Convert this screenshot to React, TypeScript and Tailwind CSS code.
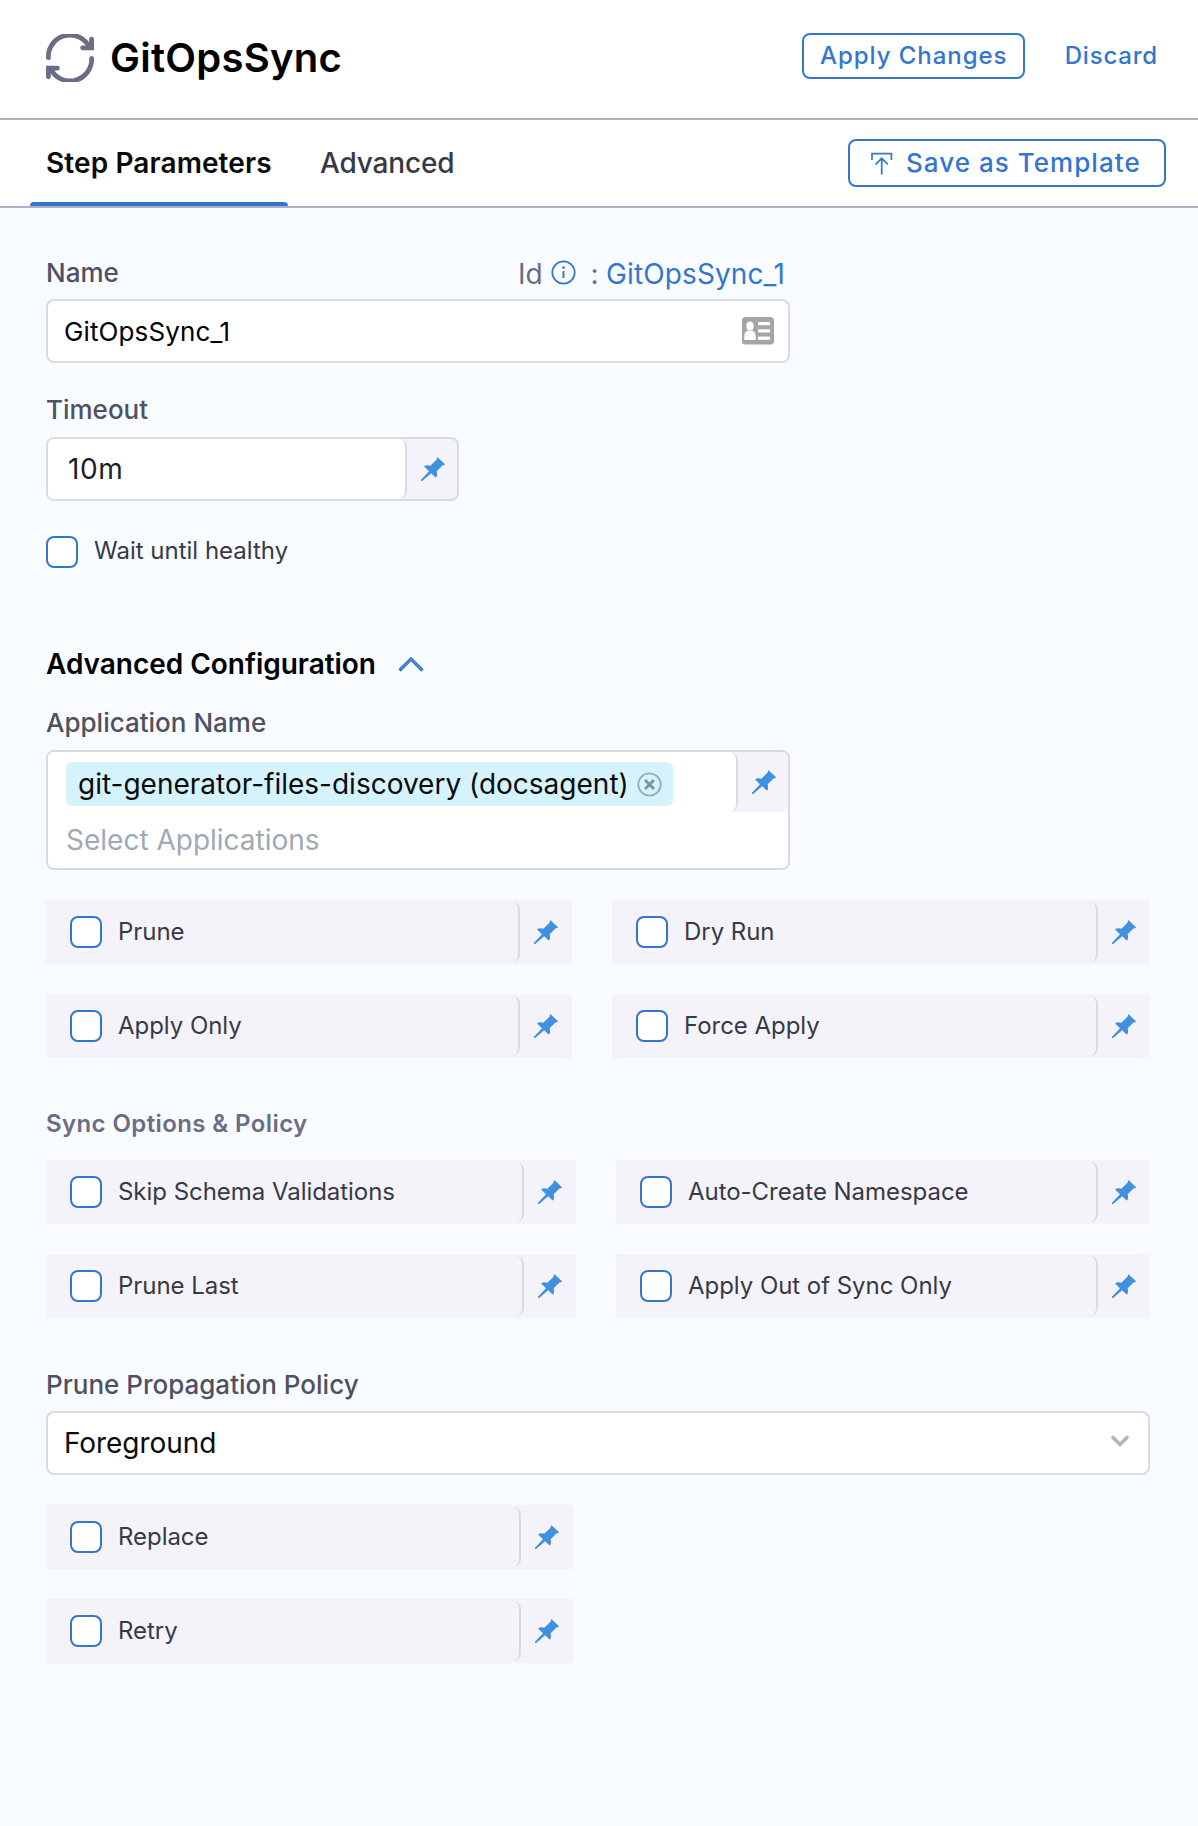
import React from 'react';

function SyncIcon() {
  return (
    <svg width="48" height="48" viewBox="0 0 48 48" fill="none" stroke="#6b6d85" strokeWidth="4.8" strokeLinecap="round">
      <path d="M2.400 23.600A21.600 21.600 0 0 1 43.500 13.400" />
      <path d="M45.600 5.200V13.800H36.600" />
      <path d="M45.600 24.400A21.600 21.600 0 0 1 4.500 34.600" />
      <path d="M2.400 42.800V34.200H11.400" />
    </svg>
  );
}

function PinIcon() {
  return (
    <svg width="24" height="24" viewBox="0 0 72 72" fill="#4090e0" className="shrink-0">
      <path d="M49 0L72 21.500L70 24.500L65 24.500L47 43Q50 52 46.500 61L43 61L30.500 49L3.500 72H0V68.500L24 42.500L10 29.500V27Q18 23.500 28 26L46.500 8Z" />
    </svg>
  );
}

function TemplateIcon() {
  return (
    <svg width="22" height="23" viewBox="0 0 22 23" fill="none" stroke="#3376cf" strokeWidth="1.7">
      <path d="M1 8V1.600H20.400V8" />
      <path d="M10.700 22.500V6.500M4.500 12.500L10.700 6.300L16.900 12.500" />
    </svg>
  );
}

function InfoIcon() {
  return (
    <svg width="25" height="25" viewBox="0 0 25 25" fill="none">
      <circle cx="12.500" cy="12.500" r="11.200" stroke="#3376cf" strokeWidth="1.700" />
      <circle cx="12.500" cy="7.600" r="1.300" fill="#3376cf" />
      <path d="M12.500 11V18" stroke="#3376cf" strokeWidth="1.900" />
    </svg>
  );
}

function ContactCardIcon() {
  return (
    <svg width="32" height="28" viewBox="0 0 32 28">
      <rect width="32" height="27.500" rx="3.500" fill="#a5a5a5" />
      <g fill="#fff">
        <ellipse cx="8" cy="9" rx="3.700" ry="4.500" />
        <path d="M2.300 23V20Q2.300 14.500 5.500 13.700H10.500Q13.700 14.500 13.700 20V23Z" />
        <rect x="16" y="5" width="12" height="3.200" />
        <rect x="16" y="12.300" width="12" height="3.200" />
        <rect x="16" y="19.600" width="12" height="3.200" />
      </g>
    </svg>
  );
}

function RemoveIcon() {
  return (
    <svg width="25" height="25" viewBox="0 0 25 25" fill="none">
      <circle cx="12.500" cy="12.500" r="11.200" stroke="#9aabb3" strokeWidth="1.800" />
      <path d="M8 8L17 17M17 8L8 17" stroke="#82949c" strokeWidth="3" />
    </svg>
  );
}

function PinButton() {
  return (
    <span className="flex w-[50px] shrink-0 items-center justify-center self-stretch pl-0.5">
      <PinIcon />
    </span>
  );
}

function CheckboxBox() {
  return <span className="h-8 w-8 shrink-0 rounded-[8px] border-2 border-[#3376cf] bg-white" />;
}

/* Checkbox with a runtime-input pin on its right side. */
function PinnedCheckbox({ label }: { label: string }) {
  return (
    <div className="flex h-16 bg-[#f4f3f9] py-0.5 pr-0.5">
      <div className="flex flex-1 items-center rounded-r-[8px] border-r-2 border-[#d9dae5] pl-6">
        <label className="flex items-center">
          <CheckboxBox />
          <span className="ml-4 text-2xl leading-8 tracking-[-0.040px] text-[#383946]">{label}</span>
        </label>
      </div>
      <PinButton />
    </div>
  );
}

function Label({ children }: { children: React.ReactNode }) {
  return <div className="h-8 text-[26px] leading-8 font-medium text-[#4f5162]">{children}</div>;
}

export default function App() {
  return (
    <div className="flex h-[1826px] w-[1198px] flex-col bg-[#f9fcff] font-['Inter',sans-serif] whitespace-nowrap">
      <header className="flex h-[120px] items-start border-b-2 border-[#b0b1c4] bg-white pl-[46px]">
        <div className="mt-[34px]">
          <SyncIcon />
        </div>
        <h1 className="mt-[34px] ml-4 text-[40px] leading-[48px] font-semibold tracking-[0.250px] text-black">GitOpsSync</h1>
        <div className="mt-[33px] mr-10 ml-auto flex h-[46px] items-center text-2xl font-medium tracking-[0.960px] text-[#3376cf]">
          <button className="mr-[40px] flex h-[46px] w-[223px] items-center justify-center rounded-[8px] border-2 border-[#3376cf] pb-px pl-px">Apply Changes</button>
          <button className="tracking-[0.800px]">Discard</button>
        </div>
      </header>

      <nav className="flex h-[88px] shrink-0 items-center border-b-2 border-[#b0b1c4] bg-white pr-8 pl-[30px]">
        <div className="flex h-full w-[258px] flex-col">
          <div className="flex flex-1 items-center pt-1 pl-4 text-[28px] font-semibold tracking-[0.100px] text-[#0b0b0d]">Step Parameters</div>
          <div className="h-1 rounded-t-[4px] bg-[#3376cf]" />
        </div>
        <div className="ml-8 text-[28px] font-medium tracking-[-0.150px] text-[#383946]">Advanced</div>
        <button className="ml-auto flex h-12 w-[318px] items-center rounded-[8px] border-2 border-[#3376cf] pl-[21px] text-[26px] font-medium tracking-[1.040px] text-[#3376cf]">
          <TemplateIcon />
          <span className="ml-[13px] pb-0.5">Save as Template</span>
        </button>
      </nav>

      <main className="flex flex-col pt-[49px] pr-12 pl-[46px]">
        <div className="flex">
          <div className="w-[472px]">
            <Label>Name</Label>
          </div>
          <div className="flex h-[34px] items-center text-[28px] leading-[34px] text-[#6b6d85]">
            <span className="w-[32.500px]">Id</span>
            <span className="-mt-1">
              <InfoIcon />
            </span>
            <span className="ml-[15px] w-[15.500px]">:</span>
            <span className="tracking-[0.120px] text-[#3376cf]">GitOpsSync_1</span>
          </div>
        </div>
        <div className="mt-2 flex h-16 w-[744px] items-center justify-between rounded-[8px] border-2 border-[#d9dae5] bg-white pr-3.5 pl-4 text-[26px] tracking-[0.120px] text-black">
          GitOpsSync_1
          <ContactCardIcon />
        </div>

        <div className="mt-[31px] mb-[11px]">
          <Label>Timeout</Label>
        </div>
        <div className="flex h-16 w-[413px] overflow-hidden rounded-[8px] border-2 border-[#d9dae5] bg-[#f4f3f9]">
          <div className="flex flex-1 items-center rounded-r-[8px] border-r-2 border-[#d9dae5] bg-white pl-5 text-[28px] tracking-[0.600px] text-[#1b2126]">10m</div>
          <PinButton />
        </div>

        <label className="mt-[35px] flex items-center">
          <CheckboxBox />
          <span className="-mt-0.5 ml-4 text-2xl leading-8 text-[#383946]">Wait until healthy</span>
        </label>

        <div className="mt-20 flex h-8 items-center">
          <h2 className="text-[28px] leading-8 font-semibold tracking-[-0.030px] text-black">Advanced Configuration</h2>
          <svg width="26" height="17" viewBox="0 0 26 17" fill="none" className="ml-[22px]">
            <path d="M1.500 14.500L13 3L24.500 14.500" stroke="#3376cf" strokeWidth="3.200" />
            <path d="M2.500 13.700L13 3.100L23.500 13.700" stroke="#7ba8e2" strokeWidth="0.700" />
          </svg>
        </div>

        <div className="mt-[27px] mb-[11px]">
          <Label>Application Name</Label>
        </div>
        <div className="flex h-[120px] w-[744px] items-start overflow-hidden rounded-[8px] border-2 border-[#d9dae5] bg-white">
          <div className="flex h-[60px] flex-1 rounded-br-[6px] bg-[#f4f3f9]">
            <div className="h-[60px] flex-1 rounded-r-[8px] border-r-2 border-[#d9dae5] bg-white pt-2.5 pl-[18px]">
              <div className="flex h-11 w-[607px] items-center rounded-[6px] bg-[#d5f3fd] pl-3 text-[28px] text-[#0b0b0d]">
                <span className="w-[558.500px]">git-generator-files-discovery (docsagent)</span>
                <RemoveIcon />
              </div>
              <div className="mt-[17px] text-[28px] leading-[34px] text-[#a0aab4]">Select Applications</div>
            </div>
            <PinButton />
          </div>
        </div>

        <section className="mt-[30px] grid grid-cols-[526px_538px] gap-x-10 gap-y-[30px]">
          <PinnedCheckbox label="Prune" />
          <PinnedCheckbox label="Dry Run" />
          <PinnedCheckbox label="Apply Only" />
          <PinnedCheckbox label="Force Apply" />
        </section>

        <h3 className="mt-[50px] text-2xl leading-8 font-semibold tracking-[0.400px] text-[#6b6d85]">Sync Options &amp; Policy</h3>
        <section className="mt-5 grid grid-cols-[530px_534px] gap-x-10 gap-y-[30px]">
          <PinnedCheckbox label="Skip Schema Validations" />
          <PinnedCheckbox label="Auto-Create Namespace" />
          <PinnedCheckbox label="Prune Last" />
          <PinnedCheckbox label="Apply Out of Sync Only" />
        </section>

        <div className="mt-[51px] mb-2.5">
          <Label>Prune Propagation Policy</Label>
        </div>
        <div className="flex h-16 items-center justify-between rounded-[8px] border-2 border-[#d9dae5] bg-white pr-[18px] pl-4 text-[28px] tracking-[-0.060px] text-[#0b0b0d]">
          Foreground
          <svg width="20" height="13" viewBox="0 0 20 13" fill="none" stroke="#b5b3c4" strokeWidth="3.600" strokeLinecap="round" className="-mt-1">
            <path d="M3 2.500L10 9.500L17 2.500" />
          </svg>
        </div>

        <section className="mt-[30px] grid grid-cols-[527px] gap-y-[30px]">
          <PinnedCheckbox label="Replace" />
          <PinnedCheckbox label="Retry" />
        </section>
      </main>
    </div>
  );
}
